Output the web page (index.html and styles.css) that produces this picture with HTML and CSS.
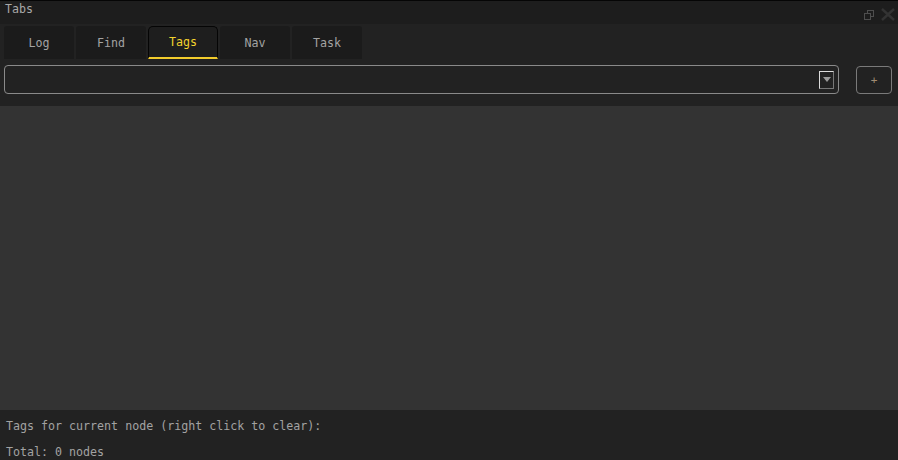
FILE: index.html
```html
<!DOCTYPE html>
<html>
<head>
<meta charset="utf-8">
<link rel="stylesheet" href="styles.css">
</head>
<body>
<div class="window">
  <div class="titlebar">
    <span class="title">Tabs</span>
    <div class="controls">
      <svg class="restore" width="10" height="10" viewBox="0 0 10 10"><rect x="3.5" y="0.5" width="6" height="6" fill="none" stroke="#4e4e4e"/><rect x="0.5" y="3.5" width="6" height="6" fill="#1d1d1d" stroke="#4e4e4e"/></svg>
      <svg class="close" width="14" height="13" viewBox="0 0 14 13"><path d="M1 1L13 12M13 1L1 12" stroke="#333" stroke-width="2.4"/></svg>
    </div>
  </div>
  <div class="panel">
    <div class="tabs">
      <div class="tab">Log</div>
      <div class="tab">Find</div>
      <div class="tab active">Tags</div>
      <div class="tab">Nav</div>
      <div class="tab">Task</div>
    </div>
    <div class="row">
      <div class="combo">
        <div class="drop"><svg width="8" height="5" viewBox="0 0 8 5"><path d="M0 0H8L4 5Z" fill="#9a9a9a"/></svg></div>
      </div>
      <div class="plus">+</div>
    </div>
  </div>
  <div class="content"></div>
  <div class="footer">
    <div class="line">Tags for current node (right click to clear):</div>
    <div class="line total">Total: 0 nodes</div>
  </div>
</div>
</body>
</html>
```
FILE: styles.css
```css
* { box-sizing: border-box; }
html, body { margin: 0; padding: 0; background: #333333; }
body { font-family: "DejaVu Sans Mono", "Liberation Mono", monospace; font-size: 11.65px; color: #a6a6a6; }
.window { width: 898px; height: 460px; display: flex; flex-direction: column; }
.titlebar { height: 24px; background: #1d1d1d; border-top: 1px solid #050505; display: flex; align-items: flex-start; justify-content: space-between; padding: 2px 3px 0 5px; }
.title { color: #a8a8a8; line-height: 12px; }
.controls { display: flex; align-items: center; gap: 7px; padding-top: 5px; }
.panel { background: #222222; height: 82px; padding: 2px 6px 0 4px; display: flex; flex-direction: column; }
.tabs { display: flex; gap: 2px; height: 33px; align-items: stretch; }
.tab { width: 70px; background: #1b1b1b; border-radius: 3px 3px 0 0; display: flex; align-items: center; justify-content: center; color: #a3a3a3; padding-top: 1px; }
.tab.active { background: #1e1e1e; border: 1px solid #050505; border-bottom: 2px solid #f2cc2c; border-radius: 5px 5px 0 0; color: #f2d22e; padding-top: 0; padding-bottom: 1px; }
.row { display: flex; align-items: flex-start; margin-top: 6px; gap: 17px; }
.combo { width: 836px; height: 29px; border: 1px solid #8a8a8a; border-radius: 4px; display: flex; align-items: center; justify-content: flex-end; padding-right: 4px; }
.drop { width: 15px; height: 18px; border: 1px solid #dcdcdc; border-right-color: #777; border-bottom-color: #777; display: flex; align-items: flex-start; justify-content: center; padding-top: 5px; }
.drop svg { display: block; }
.plus { width: 36px; height: 28px; margin-top: 1px; border: 1px solid #7a7a7a; border-radius: 4px; display: flex; align-items: center; justify-content: center; color: #a08c74; font-size: 11px; }
.content { flex: 1; background: #333333; }
.footer { height: 50px; background: #222222; padding: 9px 6px 0 6px; }
.line { line-height: 14px; color: #a2a2a2; }
.total { margin-top: 12px; }
```
